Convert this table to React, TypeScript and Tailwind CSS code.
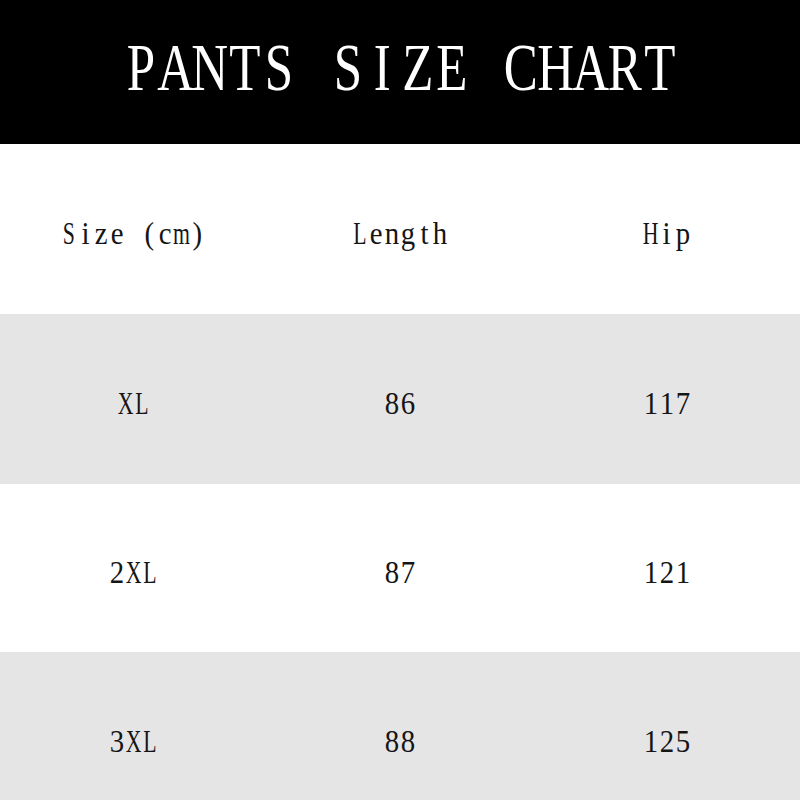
import React from "react";

function Mono({ text, cellClass, glyphClass, wideClass, narrowClass }: { text: string; cellClass: string; glyphClass: string; wideClass: string; narrowClass: string }) {
  return (
    <span className="inline-flex">
      {Array.from(text).map((ch, i) => {
        const wide = /[A-Zmw]/.test(ch);
        return (
          <span key={i} className={`inline-flex justify-center overflow-visible ${cellClass}`}>
            <span className={`inline-block whitespace-pre ${glyphClass} ${wide ? wideClass : narrowClass}`}>{ch === " " ? "\u00a0" : ch}</span>
          </span>
        );
      })}
    </span>
  );
}

const rows = [
  { bg: "bg-white", cells: ["Size (cm)", "Length", "Hip"] },
  { bg: "bg-[#e6e5e6]", cells: ["XL", "86", "117"] },
  { bg: "bg-white", cells: ["2XL", "87", "121"] },
  { bg: "bg-[#e6e5e6]", cells: ["3XL", "88", "125"] },
];

export default function App() {
  return (
    <div className="w-[800px] h-[800px] overflow-hidden bg-white flex flex-col" style={{ fontFamily: '"Liberation Serif", "Times New Roman", serif' }}>
      <div className="h-[144px] shrink-0 bg-black flex items-center justify-center pb-[11px]">
        <Mono text="PANTS SIZE CHART" cellClass="w-[34.6px]" glyphClass="text-[68px] leading-none text-white" wideClass="scale-x-75" narrowClass="scale-x-75" />
      </div>
      {rows.map((r, i) => (
        <div key={i} className={`shrink-0 grid grid-cols-3 items-center pt-[8px] ${r.bg} ${i === 2 ? "h-[168px]" : "h-[170px]"}`}>
          {r.cells.map((c, j) => (
            <div key={j} className="flex justify-center">
              <Mono text={c} cellClass="w-[16px]" glyphClass="text-[32px] leading-none text-[#151515]" wideClass="scale-x-[0.68]" narrowClass="scale-x-90" />
            </div>
          ))}
        </div>
      ))}
    </div>
  );
}
